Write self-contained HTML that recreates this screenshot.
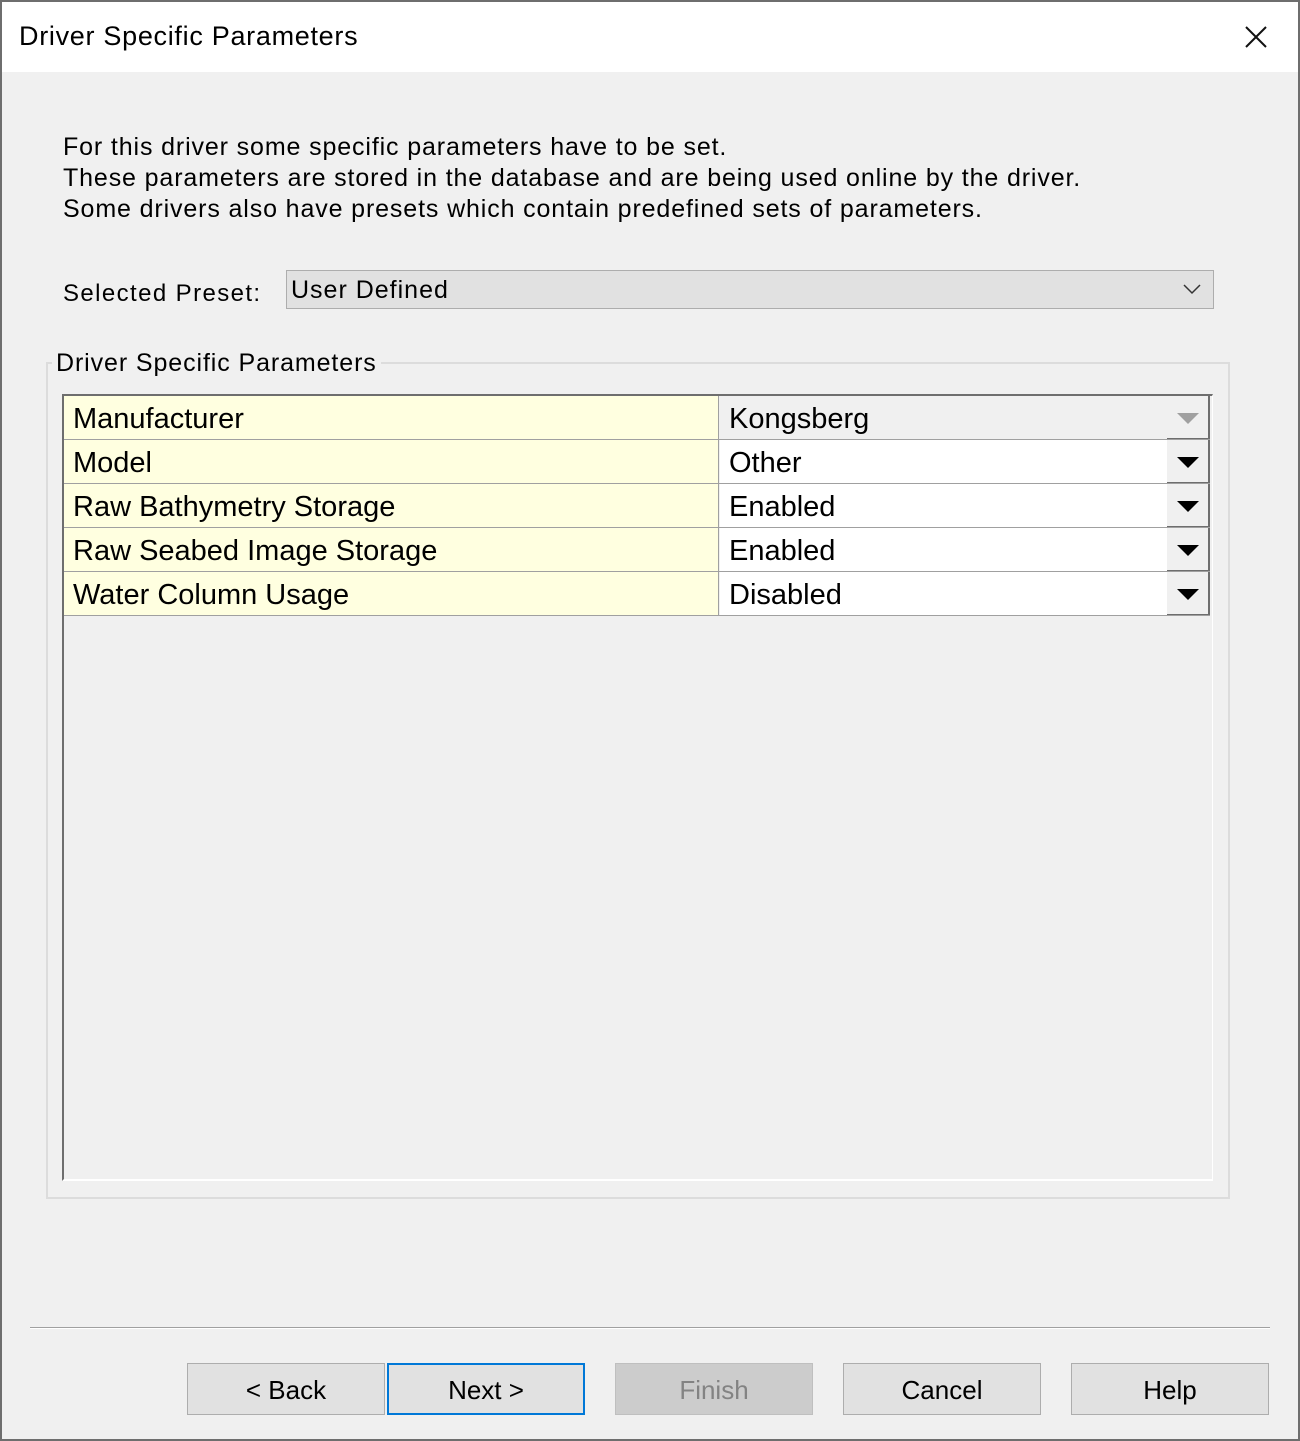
<!DOCTYPE html>
<html><head><style>
*{margin:0;padding:0;box-sizing:border-box}
body{width:1300px;height:1441px;background:#f0f0f0;font-family:"Liberation Sans",sans-serif;position:relative;overflow:hidden;color:#000}
.a{position:absolute}
.frame{left:0;top:0;width:1300px;height:1441px;border:2px solid #6e6e6e;border-top-width:2px}
.title{left:2px;top:2px;width:1296px;height:70px;background:#fff}
.row{position:absolute;left:64px;width:1146px;height:44px;border-bottom:1px solid #a0a0a0}
.row .k{position:absolute;left:0;top:0;width:655px;height:43px;background:#ffffe0;border-right:1px solid #a0a0a0;font-size:29px;padding-left:9px;line-height:46px}
.row .v{position:absolute;left:656px;top:0;width:490px;height:43px;background:#fff;font-size:29px;padding-left:9px;line-height:46px}
.row .b{position:absolute;left:1103px;top:0;width:43px;height:43px;background:#f0f0f0;border-right:2px solid #6e6e6e;border-bottom:1px solid #6e6e6e}
.tri{position:absolute;left:10px;top:17px;width:0;height:0;border-left:11px solid transparent;border-right:11px solid transparent;border-top:11px solid #000}
.btn{position:absolute;top:1363px;width:198px;height:52px;background:#e1e1e1;border:1px solid #adadad;font-size:26px;text-align:center;line-height:52px}
</style></head><body>
<div class="a frame"></div>
<div class="a title"></div>
<div class="a" style="left:19px;top:21px;font-size:27px;letter-spacing:0.7px">Driver Specific Parameters</div>
<svg class="a" style="left:1244px;top:25px" width="24" height="24"><path d="M2 2L22 22M22 2L2 22" stroke="#111" stroke-width="2"/></svg>
<div class="a" style="left:63px;top:132px;font-size:25px;letter-spacing:0.87px;line-height:31px">For this driver some specific parameters have to be set.<br>These parameters are stored in the database and are being used online by the driver.<br>Some drivers also have presets which contain predefined sets of parameters.</div>
<div class="a" style="left:63px;top:280px;font-size:24px;letter-spacing:1.4px">Selected Preset:</div>
<div class="a" style="left:286px;top:270px;width:928px;height:39px;background:#e1e1e1;border:1px solid #adadad;font-size:25px;letter-spacing:1px;padding-left:4px;line-height:38px">User Defined</div>
<svg class="a" style="left:1182px;top:282px" width="20" height="14"><path d="M2 3L10 11L18 3" stroke="#333" stroke-width="1.5" fill="none"/></svg>
<div class="a" style="left:46px;top:362px;width:1184px;height:837px;border:2px solid #dcdcdc"></div>
<div class="a" style="left:52px;top:349px;background:#f0f0f0;padding:0 4px;font-size:25px;letter-spacing:0.9px">Driver Specific Parameters</div>
<div class="a" style="left:62px;top:394px;width:1151px;height:787px;border-left:2px solid #6e6e6e;border-top:2px solid #6e6e6e;border-right:1px solid #fff;border-bottom:2px solid #fff;background:#f0f0f0"></div>
<div class="row" style="top:396px"><div class="k">Manufacturer</div><div class="v" style="background:#f0f0f0">Kongsberg</div><div class="b"><div class="tri" style="border-top-color:#a0a0a0"></div></div></div>
<div class="row" style="top:440px"><div class="k">Model</div><div class="v">Other</div><div class="b"><div class="tri"></div></div></div>
<div class="row" style="top:484px"><div class="k">Raw Bathymetry Storage</div><div class="v">Enabled</div><div class="b"><div class="tri"></div></div></div>
<div class="row" style="top:528px"><div class="k">Raw Seabed Image Storage</div><div class="v">Enabled</div><div class="b"><div class="tri"></div></div></div>
<div class="row" style="top:572px"><div class="k">Water Column Usage</div><div class="v">Disabled</div><div class="b"><div class="tri"></div></div></div>
<div class="a" style="left:30px;top:1327px;width:1240px;height:1px;background:#a0a0a0"></div>
<div class="a" style="left:30px;top:1328px;width:1240px;height:1px;background:#fff"></div>
<div class="btn" style="left:187px">&lt; Back</div>
<div class="btn" style="left:387px;border:2px solid #0078d7;line-height:50px">Next &gt;</div>
<div class="btn" style="left:615px;background:#cccccc;border-color:#bfbfbf;color:#838383">Finish</div>
<div class="btn" style="left:843px">Cancel</div>
<div class="btn" style="left:1071px">Help</div>
</body></html>
